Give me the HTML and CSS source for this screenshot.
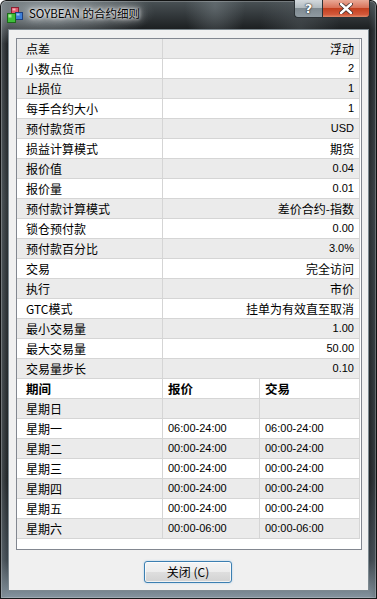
FILE: index.html
```html
<!DOCTYPE html>
<html lang="zh-CN">
<head>
    <meta charset="UTF-8">
    <title>SOYBEAN 的合约细则</title>
    <link rel="stylesheet" href="styles.css">
</head>
<body>
<div class="window">
    <div class="titlebar">
        <svg class="appicon" width="16" height="16" viewBox="0 0 16 16">
            <rect x="4.5" y="0.5" width="7" height="6" fill="#e0566b" stroke="#8a2030"/>
            <rect x="5.5" y="1.5" width="3" height="2" fill="#f7b2bc"/>
            <rect x="8.5" y="5.5" width="7" height="7" fill="#3d7fd8" stroke="#1c3f80"/>
            <rect x="9.5" y="6.5" width="3" height="2" fill="#9cc4f4"/>
            <rect x="0.5" y="6.5" width="8" height="9" fill="#3fbf3a" stroke="#1d6a1a"/>
            <rect x="1.5" y="7.5" width="3" height="3" fill="#a6ee96"/>
        </svg>
        <div class="title">SOYBEAN 的合约细则</div>
        <div class="captions">
            <div class="cbtn help">?</div>
            <div class="cbtn close">
                <svg width="14" height="11" viewBox="0 0 14 11">
                    <path d="M2 1 L12 10 M12 1 L2 10" stroke="#3a2a28" stroke-width="4" stroke-linecap="round"/>
                    <path d="M2 1 L12 10 M12 1 L2 10" stroke="#fff" stroke-width="2.4" stroke-linecap="round"/>
                </svg>
            </div>
        </div>
    </div>
    <div class="client">
        <div class="list">
            <div class="row g"><div class="k">点差</div><div class="v">浮动</div></div>
            <div class="row"><div class="k">小数点位</div><div class="v n">2</div></div>
            <div class="row g"><div class="k">止损位</div><div class="v n">1</div></div>
            <div class="row"><div class="k">每手合约大小</div><div class="v n">1</div></div>
            <div class="row g"><div class="k">预付款货币</div><div class="v n">USD</div></div>
            <div class="row"><div class="k">损益计算模式</div><div class="v">期货</div></div>
            <div class="row g"><div class="k">报价值</div><div class="v n">0.04</div></div>
            <div class="row"><div class="k">报价量</div><div class="v n">0.01</div></div>
            <div class="row g"><div class="k">预付款计算模式</div><div class="v">差价合约-指数</div></div>
            <div class="row"><div class="k">锁仓预付款</div><div class="v n">0.00</div></div>
            <div class="row g"><div class="k">预付款百分比</div><div class="v n">3.0%</div></div>
            <div class="row"><div class="k">交易</div><div class="v">完全访问</div></div>
            <div class="row g"><div class="k">执行</div><div class="v">市价</div></div>
            <div class="row"><div class="k">GTC模式</div><div class="v">挂单为有效直至取消</div></div>
            <div class="row g"><div class="k">最小交易量</div><div class="v n">1.00</div></div>
            <div class="row"><div class="k">最大交易量</div><div class="v n">50.00</div></div>
            <div class="row g"><div class="k">交易量步长</div><div class="v n">0.10</div></div>

            <div class="row sched head"><div class="k">期间</div><div class="t">报价</div><div class="t">交易</div></div>
            <div class="row sched g"><div class="k">星期日</div><div class="t"></div><div class="t"></div></div>
            <div class="row sched"><div class="k">星期一</div><div class="t n">06:00-24:00</div><div class="t n">06:00-24:00</div></div>
            <div class="row sched g"><div class="k">星期二</div><div class="t n">00:00-24:00</div><div class="t n">00:00-24:00</div></div>
            <div class="row sched"><div class="k">星期三</div><div class="t n">00:00-24:00</div><div class="t n">00:00-24:00</div></div>
            <div class="row sched g"><div class="k">星期四</div><div class="t n">00:00-24:00</div><div class="t n">00:00-24:00</div></div>
            <div class="row sched"><div class="k">星期五</div><div class="t n">00:00-24:00</div><div class="t n">00:00-24:00</div></div>
            <div class="row sched g"><div class="k">星期六</div><div class="t n">00:00-06:00</div><div class="t n">00:00-06:00</div></div>
        </div>
        <div class="buttons">
            <div class="btn">关闭 (C)</div>
        </div>
    </div>
</div>
</body>
</html>
```

FILE: styles.css
```css
*{
    margin: 0;
    padding: 0;
    box-sizing: border-box;
}
html, body{
    width: 377px;
    height: 599px;
    overflow: hidden;
    background: #fff;
    font-family: "Noto Sans CJK SC", sans-serif;
}
.window{
    width: 377px;
    height: 599px;
    display: flex;
    flex-direction: column;
    border-radius: 6px 6px 0 0;
    background:
        radial-gradient(ellipse 110px 34px at 45px 12px, rgba(175,185,190,0.75), rgba(175,185,190,0) 100%),
        radial-gradient(ellipse 30px 50px at 215px 6px, rgba(130,140,145,0.45), rgba(130,140,145,0) 100%),
        radial-gradient(ellipse 40px 60px at 300px 30px, rgba(110,118,124,0.35), rgba(110,118,124,0) 100%),
        linear-gradient(to right, rgba(120,130,136,0.55) 0, rgba(0,0,0,0) 8px, rgba(0,0,0,0) 369px, rgba(90,100,106,0.5) 377px),
        linear-gradient(to bottom, #4b5357 0, #1b1e20 30px, #2b3134 200px, #1e2224 480px, #3b454c 560px, #8796a1 599px);
    box-shadow: inset 0 0 0 1px rgba(0,0,0,0.85), inset 0 0 0 2px rgba(255,255,255,0.22);
}
.titlebar{
    height: 29px;
    display: flex;
    align-items: flex-start;
    padding-left: 7px;
}
.appicon{
    margin-top: 7px;
    flex: none;
}
.title{
    margin-left: 6px;
    margin-top: 5px;
    font-size: 11.5px;
    line-height: 16px;
    color: #000;
    text-shadow: 0 0 6px #fff, 0 0 10px rgba(255,255,255,0.9), 0 0 3px #fff;
    white-space: nowrap;
}
.captions{
    margin-left: auto;
    margin-right: 7px;
    display: flex;
    height: 18px;
}
.cbtn{
    height: 18px;
    display: flex;
    align-items: center;
    justify-content: center;
    border: 1px solid #2c3236;
    border-top: none;
}
.help{
    width: 28px;
    border-radius: 0 0 0 4px;
    border-right: none;
    background: linear-gradient(to bottom, #d3d9dd 0, #b2bbc0 45%, #7f8a91 50%, #8f9aa1 100%);
    color: #fff;
    font: bold 13px "DejaVu Sans", sans-serif;
    text-shadow: 0 0 2px #222, 0 0 1px #000;
}
.close{
    width: 48px;
    border-radius: 0 0 4px 0;
    background: linear-gradient(to bottom, #e9a996 0, #d9735a 45%, #c3401f 50%, #d2583a 85%, #e08a6a 100%);
}
.client{
    flex: 1;
    margin: 0 8px 8px 8px;
    background: #f0f0f0;
    border: 1px solid #7d8990;
    padding: 8px 6px 7px 7px;
    display: flex;
    flex-direction: column;
}
.list{
    width: 346px;
    height: 512px;
    border: 1px solid #828790;
    background: #fff;
}
.row{
    display: grid;
    grid-template-columns: 146px 197px;
    height: 20px;
    font-size: 12px;
    line-height: 19px;
    color: #000;
}
.row > div{
    height: 20px;
    border-right: 1px solid #d5d5d5;
    border-bottom: 1px solid #d5d5d5;
    white-space: nowrap;
    overflow: hidden;
}
.row.g > div{
    background: #ebebeb;
}
.row .k{
    padding-left: 9px;
}
.row .v{
    text-align: right;
    padding-right: 5px;
}
.row.sched{
    grid-template-columns: 146px 97px 100px;
}
.row .t{
    padding-left: 5px;
}
.row.head{
    font-weight: bold;
    font-size: 12.5px;
}
.n{
    font-family: "Liberation Sans", sans-serif;
    font-size: 11px;
}
.buttons{
    margin-top: 11px;
    display: flex;
    justify-content: center;
}
.btn{
    width: 88px;
    height: 22px;
    margin-right: 2px;
    border: 1px solid #3c7fb1;
    border-radius: 3px;
    background: linear-gradient(to bottom, #f4f4f4 0, #ececec 50%, #dedede 51%, #d2d2d2 100%);
    box-shadow: inset 0 0 0 1px rgba(255,255,255,0.7), 0 0 2px rgba(90,170,230,0.5);
    text-align: center;
    font-size: 12px;
    line-height: 20px;
    color: #000;
}
```
